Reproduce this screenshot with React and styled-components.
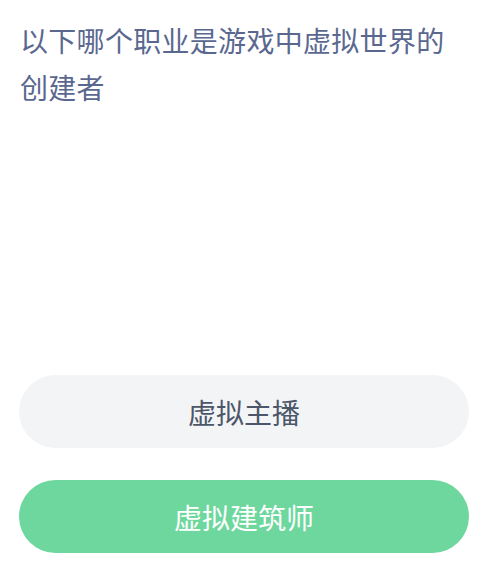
import React from "react";
import styled, { createGlobalStyle } from "styled-components";

const Global = createGlobalStyle`
  html, body { margin: 0; padding: 0; background: #ffffff; }
  body { font-family: "Noto Sans CJK SC", "Noto Sans", sans-serif; }
`;

const Page = styled.div`
  width: 482px;
  height: 580px;
  box-sizing: border-box;
  padding: 17px 13px 0 19px;
  display: flex;
  flex-direction: column;
  background: #ffffff;
`;

const Question = styled.div`
  font-size: 28px;
  line-height: 47px;
  color: #5a6890;
  padding-left: 1px;
  letter-spacing: 0.3px;
`;

const Options = styled.div`
  margin-top: 264px;
  display: flex;
  flex-direction: column;
  gap: 32px;
`;

const Option = styled.div`
  height: 73px;
  border-radius: 37px;
  display: flex;
  align-items: center;
  justify-content: center;
  font-size: 28px;
  background: ${(p) => (p.$correct ? "#6dd79e" : "#f3f4f6")};
  color: ${(p) => (p.$correct ? "#ffffff" : "#4c5669")};
`;

export default function App() {
  return (
    <>
      <Global />
      <Page>
        <Question>以下哪个职业是游戏中虚拟世界的创建者</Question>
        <Options>
          <Option>虚拟主播</Option>
          <Option $correct>虚拟建筑师</Option>
        </Options>
      </Page>
    </>
  );
}
